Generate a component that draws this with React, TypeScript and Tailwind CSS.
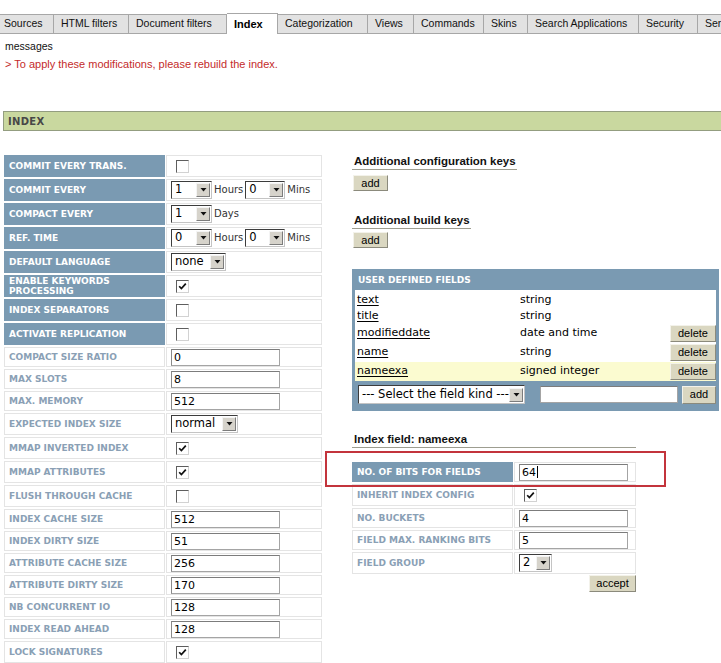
import React from 'react';

const V = "font-['DejaVu_Sans',Verdana,sans-serif]";
const A = "font-['Liberation_Sans',Arial,sans-serif]";

const tabs = [
  { name: 'Sources', w: 'w-[54px] pl-[4px]' },
  { name: 'HTML filters', w: 'w-[75px] pl-[7px]' },
  { name: 'Document filters', w: 'w-[98px] pl-[7px]' },
  { name: 'Index', w: 'w-[51px] pl-[7px]', active: true },
  { name: 'Categorization', w: 'w-[90px] pl-[7px]' },
  { name: 'Views', w: 'w-[46px] pl-[7px]' },
  { name: 'Commands', w: 'w-[70px] pl-[7px]' },
  { name: 'Skins', w: 'w-[44px] pl-[7px]' },
  { name: 'Search Applications', w: 'w-[111px] pl-[7px]' },
  { name: 'Security', w: 'w-[59px] pl-[7px]' },
  { name: 'Services', w: 'w-[100px] pl-[7px]' },
];

function Checkbox({ checked }: { checked?: boolean }) {
  return (
    <span className="ml-[5px] inline-flex h-[13px] w-[13px] shrink-0 items-center justify-center border border-t-[#5e5e5e] border-l-[#5e5e5e] border-r-[#d2d2d2] border-b-[#d2d2d2] bg-white">
      {checked && (
        <svg width="9" height="9" viewBox="0 0 9 9">
          <path d="M1.2 4.2 L3.4 6.6 L7.8 1.6" fill="none" stroke="#111" strokeWidth="1.7" />
        </svg>
      )}
    </span>
  );
}

function Select({ value, className }: { value: string; className: string }) {
  return (
    <span
      className={`inline-flex h-[18px] shrink-0 items-center border border-t-[#3c3c3c] border-l-[#3c3c3c] border-r-[#c4c4c4] border-b-[#c4c4c4] bg-white pl-[3px] pr-[1px] text-[11.5px] leading-none text-black ${V} ${className}`}
    >
      <span className="flex-1 whitespace-nowrap">{value}</span>
      <span className="flex h-[14px] w-[14px] shrink-0 items-center justify-center border border-t-[#f4f4f4] border-l-[#f4f4f4] border-r-[#7c7c7c] border-b-[#7c7c7c] bg-[#d6d3cb]">
        <svg width="7" height="4" viewBox="0 0 7 4">
          <path d="M0.5 0h6L3.5 3.5z" fill="#111" />
        </svg>
      </span>
    </span>
  );
}

function TextBox({ value, caret }: { value: string; caret?: boolean }) {
  return (
    <span
      className={`flex h-[17px] w-[109px] shrink-0 items-center border border-[#a4a4a4] border-t-[#7c7c7c] border-l-[#8a8a8a] bg-white pl-[2px] text-[11px] leading-none text-black ${V}`}
    >
      {value}
      {caret && <span className="ml-[1px] h-[12px] w-[1px] bg-black" />}
    </span>
  );
}

function Btn({ label, className }: { label: string; className: string }) {
  return (
    <button
      className={`flex shrink-0 items-center justify-center border border-t-[#f3f2ea] border-l-[#f3f2ea] border-r-[#8b8a7c] border-b-[#8b8a7c] bg-[#dad7c1] text-[11px] leading-none text-black ${A} ${className}`}
    >
      {label}
    </button>
  );
}

function Unit({ text }: { text: string }) {
  return <span className={`mx-[2px] text-[10px] leading-none text-[#333] ${V}`}>{text}</span>;
}

type RowDef = { label: string; blue?: boolean; tall?: boolean; value: React.ReactNode };

function FormRow({ row, labelW, valueW }: { row: RowDef; labelW: string; valueW: string }) {
  const h = row.tall ? 'h-[22px]' : 'h-[20px]';
  return (
    <div className={`flex gap-[1px] ${h}`}>
      <div
        className={`flex items-center border pl-[4px] text-[9px] font-bold leading-[10px] ${V} ${labelW} ${
          row.blue ? 'border-[#7a9ab2] bg-[#7a9ab2] text-white' : 'border-[#e4e4e4] bg-white text-[#8aa0b5]'
        }`}
      >
        {row.label}
      </div>
      <div className={`flex items-center border border-[#e4e4e4] bg-white pl-[4px] ${valueW}`}>{row.value}</div>
    </div>
  );
}

const leftRows: RowDef[] = [
  { label: 'COMMIT EVERY TRANS.', blue: true, tall: true, value: <Checkbox /> },
  {
    label: 'COMMIT EVERY',
    blue: true,
    tall: true,
    value: (
      <>
        <Select value="1" className="w-[41px]" />
        <Unit text="Hours" />
        <Select value="0" className="w-[40px]" />
        <Unit text="Mins" />
      </>
    ),
  },
  {
    label: 'COMPACT EVERY',
    blue: true,
    tall: true,
    value: (
      <>
        <Select value="1" className="w-[41px]" />
        <Unit text="Days" />
      </>
    ),
  },
  {
    label: 'REF. TIME',
    blue: true,
    tall: true,
    value: (
      <>
        <Select value="0" className="w-[41px]" />
        <Unit text="Hours" />
        <Select value="0" className="w-[40px]" />
        <Unit text="Mins" />
      </>
    ),
  },
  { label: 'DEFAULT LANGUAGE', blue: true, tall: true, value: <Select value="none" className="w-[55px]" /> },
  { label: 'ENABLE KEYWORDS PROCESSING', blue: true, tall: true, value: <Checkbox checked /> },
  { label: 'INDEX SEPARATORS', blue: true, tall: true, value: <Checkbox /> },
  { label: 'ACTIVATE REPLICATION', blue: true, tall: true, value: <Checkbox /> },
  { label: 'COMPACT SIZE RATIO', value: <TextBox value="0" /> },
  { label: 'MAX SLOTS', value: <TextBox value="8" /> },
  { label: 'MAX. MEMORY', value: <TextBox value="512" /> },
  { label: 'EXPECTED INDEX SIZE', tall: true, value: <Select value="normal" className="w-[67px]" /> },
  { label: 'MMAP INVERTED INDEX', tall: true, value: <Checkbox checked /> },
  { label: 'MMAP ATTRIBUTES', tall: true, value: <Checkbox checked /> },
  { label: 'FLUSH THROUGH CACHE', tall: true, value: <Checkbox /> },
  { label: 'INDEX CACHE SIZE', value: <TextBox value="512" /> },
  { label: 'INDEX DIRTY SIZE', value: <TextBox value="51" /> },
  { label: 'ATTRIBUTE CACHE SIZE', value: <TextBox value="256" /> },
  { label: 'ATTRIBUTE DIRTY SIZE', value: <TextBox value="170" /> },
  { label: 'NB CONCURRENT IO', value: <TextBox value="128" /> },
  { label: 'INDEX READ AHEAD', value: <TextBox value="128" /> },
  { label: 'LOCK SIGNATURES', tall: true, value: <Checkbox checked /> },
];

const fieldRows: RowDef[] = [
  { label: 'NO. OF BITS FOR FIELDS', blue: true, value: <TextBox value="64" caret /> },
  { label: 'INHERIT INDEX CONFIG', tall: true, value: <Checkbox checked /> },
  { label: 'NO. BUCKETS', value: <TextBox value="4" /> },
  { label: 'FIELD MAX. RANKING BITS', value: <TextBox value="5" /> },
  { label: 'FIELD GROUP', tall: true, value: <Select value="2" className="w-[33px]" /> },
];

const userFields = [
  { name: 'text', kind: 'string' },
  { name: 'title', kind: 'string' },
  { name: 'modifieddate', kind: 'date and time', del: true },
  { name: 'name', kind: 'string', del: true },
  { name: 'nameexa', kind: 'signed integer', del: true, current: true },
];

function Heading({ text, className }: { text: string; className: string }) {
  return (
    <div
      className={`border-b border-[#9d9d90] pb-[1px] pl-[2px] text-[11.5px] font-bold leading-[14px] text-[#111] ${A} ${className}`}
    >
      {text}
    </div>
  );
}

export default function App() {
  return (
    <div className={`relative h-[663px] w-[721px] overflow-hidden bg-white ${A}`}>
      {/* tabs */}
      <div className="mt-[13px] flex h-[21px] items-end whitespace-nowrap">
        {tabs.map((t) =>
          t.active ? (
            <div
              key={t.name}
              className={`flex h-[21px] shrink-0 items-center border-t border-r border-[#a7a7a7] bg-white text-[11px] font-bold text-black ${t.w}`}
            >
              {t.name}
            </div>
          ) : (
            <div
              key={t.name}
              className={`flex h-[20px] shrink-0 items-center border-y border-r border-[#a7a7a7] bg-[#e2e2e2] text-[10.5px] text-[#111] ${t.w}`}
            >
              {t.name}
            </div>
          ),
        )}
      </div>

      {/* messages */}
      <div className="mt-[6px] pl-[5px] text-[10.5px] leading-[13px] text-[#111]">messages</div>
      <div className="mt-[5px] pl-[5px] text-[11px] leading-[13px] text-[#c42b2b]">
        &gt; To apply these modifications, please rebuild the index.
      </div>

      {/* section bar */}
      <div
        className={`ml-[3px] mt-[40px] flex h-[20px] items-center border-y border-l border-[#939d80] bg-[#c9d89f] pl-[4px] text-[10px] font-bold tracking-[0.3px] text-[#474747] ${V}`}
      >
        INDEX
      </div>

      <div className="mt-[23px] flex items-start">
        {/* left form */}
        <div className="ml-[4px] mt-[1px] flex flex-col gap-[2px]">
          {leftRows.map((r) => (
            <FormRow key={r.label} row={r} labelW="w-[161px]" valueW="w-[156px]" />
          ))}
        </div>

        {/* right column */}
        <div className="ml-[30px] flex flex-col">
          <Heading text="Additional configuration keys" className="w-[165px]" />
          <Btn label="add" className="ml-[1px] mt-[5px] h-[16px] w-[35px]" />

          <Heading text="Additional build keys" className="mt-[22px] w-[119px]" />
          <Btn label="add" className="ml-[1px] mt-[3px] h-[16px] w-[35px]" />

          <div className="mt-[21px] w-[367px] border-[3px] border-[#7a9ab2] bg-white">
            <div
              className={`flex h-[18px] items-center bg-[#7a9ab2] pl-[3px] text-[9px] font-bold text-white ${V}`}
            >
              USER DEFINED FIELDS
            </div>
            <div className="pt-[2px]">
              {userFields.map((f) => (
                <div
                  key={f.name}
                  className={`flex items-center text-[11px] text-black ${V} ${f.del ? 'h-[19px]' : 'h-[16px]'} ${
                    f.current ? 'bg-[#fbfbd0]' : ''
                  }`}
                >
                  <span className="w-[165px] pl-[2px] underline decoration-1 underline-offset-2">{f.name}</span>
                  <span className="flex-1">{f.kind}</span>
                  {f.del && <Btn label="delete" className="h-[17px] w-[46px]" />}
                </div>
              ))}
            </div>
            <div className="flex h-[27px] items-center bg-[#7a9ab2] pl-[3px]">
              <Select value="--- Select the field kind ---" className="h-[19px] w-[167px]" />
              <span className="ml-[15px] h-[17px] w-[138px] border border-[#a4a4a4] border-t-[#7c7c7c] bg-white" />
              <Btn label="add" className="ml-[4px] h-[18px] w-[34px]" />
            </div>
          </div>

          <Heading text="Index field: nameexa" className="mt-[21px] w-[284px]" />

          <div className="mt-[14px] flex w-[284px] flex-col gap-[2px]">
            {fieldRows.map((r) => (
              <FormRow key={r.label} row={r} labelW="w-[161px]" valueW="w-[122px]" />
            ))}
          </div>
          <div className="mt-[1px] flex w-[284px] justify-end">
            <Btn label="accept" className="h-[17px] w-[47px]" />
          </div>
        </div>
      </div>

      {/* annotation frame */}
      <div className="pointer-events-none absolute left-[325px] top-[451px] h-[36px] w-[341px] border-2 border-[#c3343c]" />
    </div>
  );
}
